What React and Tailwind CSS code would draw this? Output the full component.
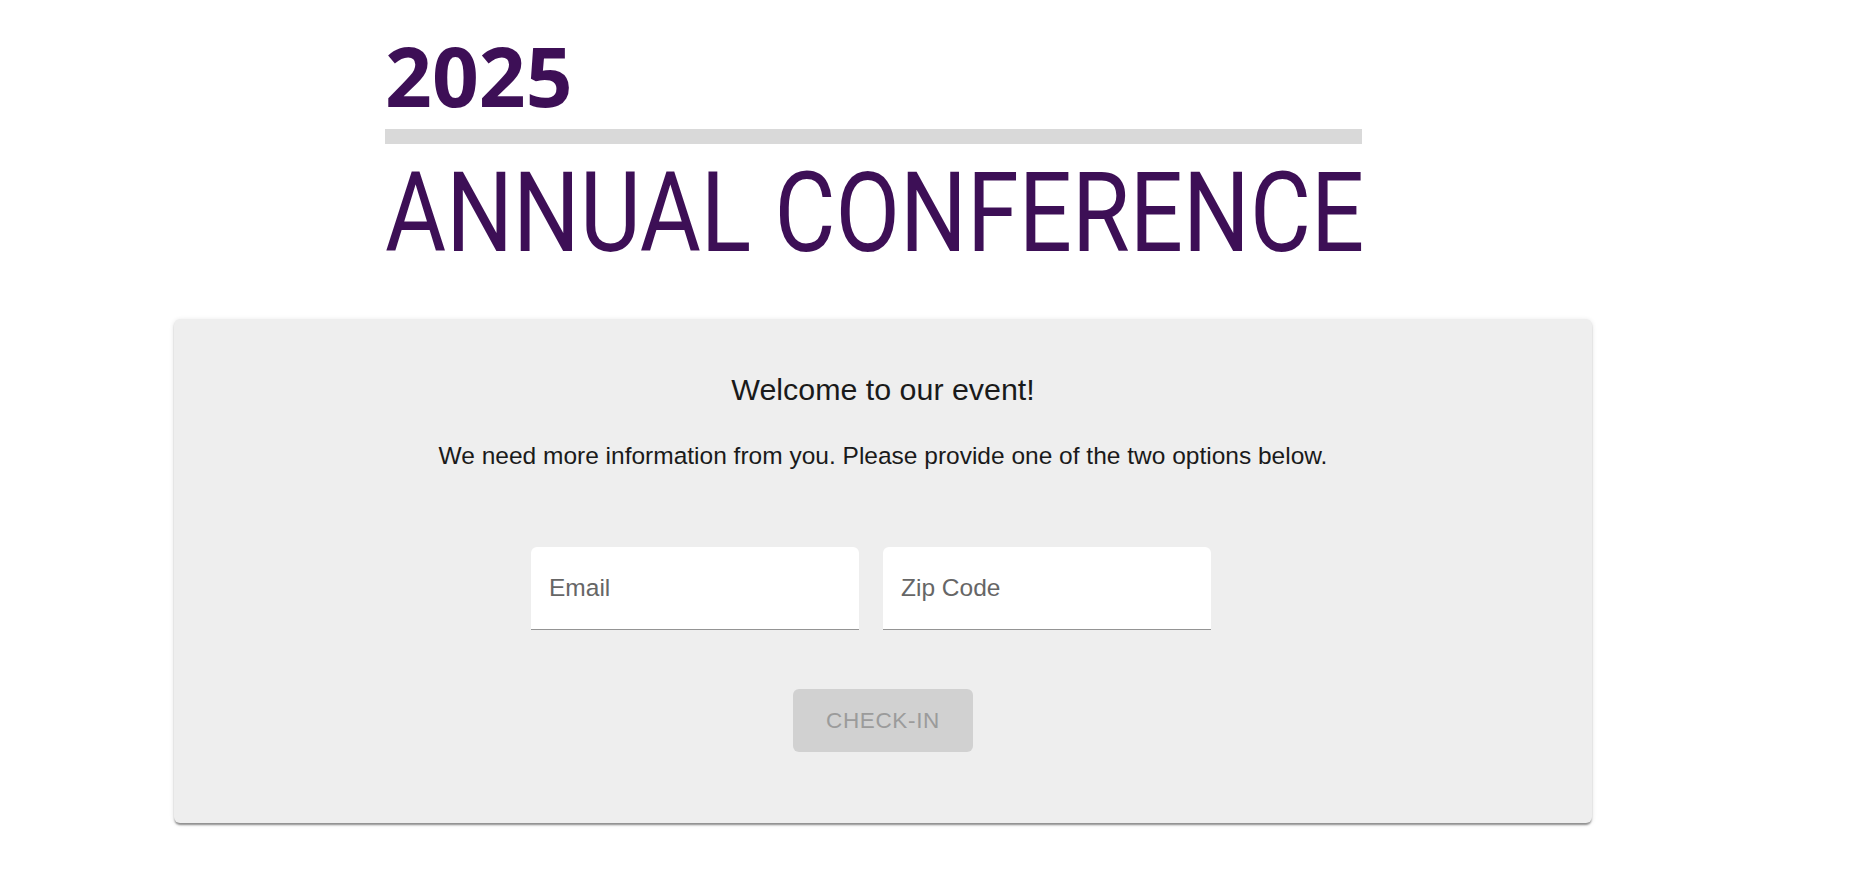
import React, { useState } from 'react';

// Check-in page: conference title block + info card
const sans = { fontFamily: '"Liberation Sans", Arial, sans-serif' };

const Field = ({ label, value, onChange }) => (
  <div className="w-[328px] h-[83px] bg-white rounded-t-[6px] border-b border-[#949494] flex">
    <input
      type="text"
      placeholder={label}
      value={value}
      onChange={(e) => onChange(e.target.value)}
      className="w-full h-[82px] bg-transparent pl-[18px] pr-[18px] text-[24.5px] text-[#222] placeholder:text-[#666] outline-none"
      style={sans}
    />
  </div>
);

const App = () => {
  const [email, setEmail] = useState('');
  const [zip, setZip] = useState('');
  const disabled = !email && !zip;

  return (
    <div className="w-full min-h-screen bg-white pt-[34px]" style={sans}>
      {/* Title block */}
      <div className="ml-[385px] w-[977px]">
        <div
          className="text-[82px] leading-none font-bold text-[#3d0f56]"
          style={{ fontFamily: '"Open Sans", sans-serif' }}
        >
          2025
        </div>
        <div className="mt-[13px] h-[15px] bg-[#d9d9d9]"></div>
        <div
          className="mt-[13px] text-[112px] leading-none font-normal text-[#3d0f56] whitespace-nowrap origin-left scale-x-[0.837]"
          style={{ fontFamily: 'Roboto, sans-serif' }}
        >
          ANNUAL CONFERENCE
        </div>
      </div>

      {/* Card */}
      <div className="ml-[174px] mt-[50px] w-[1418px] bg-[#eeeeee] rounded-[6px] pt-[50px] pb-[71px] flex flex-col items-center shadow-[0_3px_2px_-1px_rgba(0,0,0,0.3),0_2px_2px_0_rgba(0,0,0,0.14),0_1px_5px_0_rgba(0,0,0,0.12)]">
        <h1 className="text-[30.4px] leading-[40px] text-[#1a1a1a] font-normal">Welcome to our event!</h1>
        <p className="mt-[29px] text-[24.5px] leading-[36px] text-[#1a1a1a]">
          We need more information from you. Please provide one of the two options below.
        </p>
        <div className="mt-[73px] flex gap-[24px] pr-[24px]">
          <Field label="Email" value={email} onChange={setEmail} />
          <Field label="Zip Code" value={zip} onChange={setZip} />
        </div>
        <button
          disabled={disabled}
          className={
            disabled
              ? 'mt-[59px] h-[63px] px-[33px] rounded-[6px] bg-[#d1d1d1] text-[#9b9b9b] text-[22.5px] tracking-[0.02857em] uppercase cursor-default'
              : 'mt-[59px] h-[63px] px-[33px] rounded-[6px] bg-[#3d0f56] text-white text-[22.5px] tracking-[0.02857em] uppercase'
          }
          style={sans}
        >
          Check-in
        </button>
      </div>
    </div>
  );
};

export default App;
